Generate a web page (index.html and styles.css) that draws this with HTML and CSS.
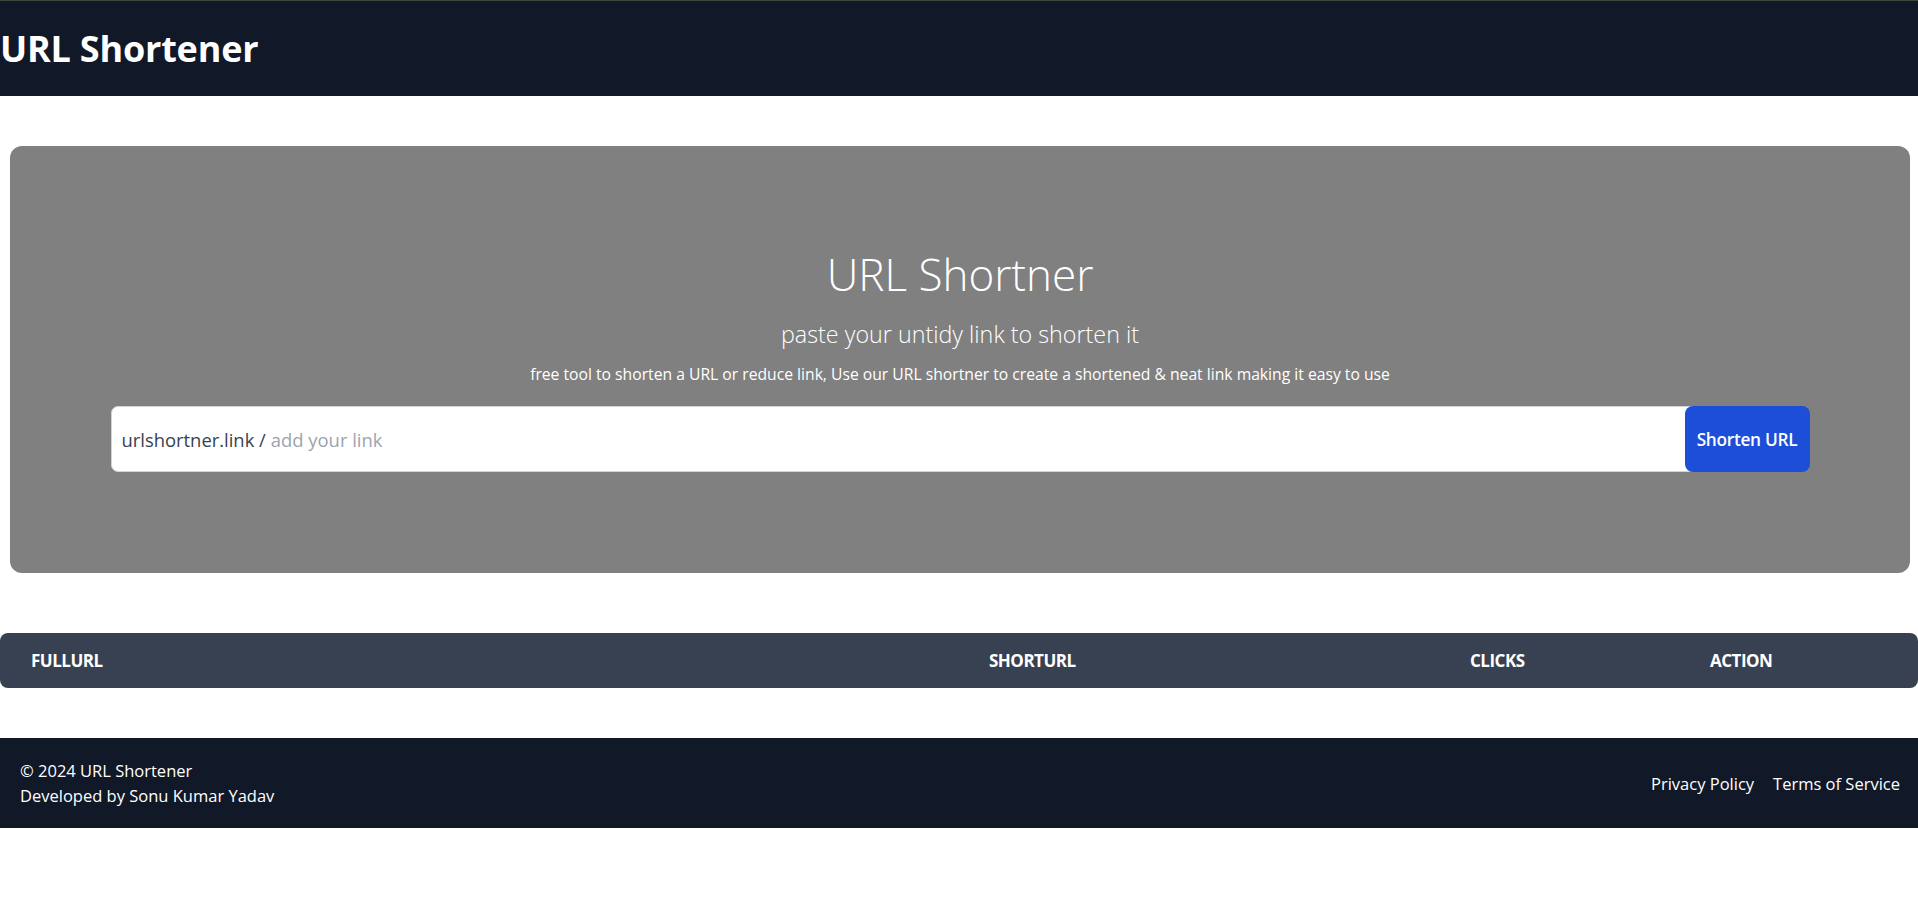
FILE: index.html
```html
<!DOCTYPE html>
<html lang="en">
<head>
<meta charset="utf-8">
<title>URL Shortener</title>
<link rel="stylesheet" href="styles.css">
</head>
<body>
<header class="topbar">
  <h1 class="brand">URL Shortener</h1>
</header>
<main class="main">
  <section class="hero">
    <h2 class="hero-title">URL Shortner</h2>
    <p class="hero-sub">paste your untidy link to shorten it</p>
    <p class="hero-desc">free tool to shorten a URL or reduce link, Use our URL shortner to create a shortened &amp; neat link making it easy to use</p>
    <form class="shorten-form">
      <div class="field">
        <span class="prefix">urlshortner.link /</span>
        <input class="link-input" type="text" placeholder="add your link">
      </div>
      <button class="btn" type="button">Shorten URL</button>
    </form>
  </section>
  <div class="table">
    <div class="thead">
      <div class="th">Fullurl</div>
      <div class="th">Shorturl</div>
      <div class="th">Clicks</div>
      <div class="th">Action</div>
    </div>
  </div>
</main>
<footer class="footer">
  <div class="credits">
    <div>© 2024 URL Shortener</div>
    <div>Developed by Sonu Kumar Yadav</div>
  </div>
  <nav class="links">
    <a href="#">Privacy Policy</a>
    <a href="#">Terms of Service</a>
  </nav>
</footer>
</body>
</html>
```
FILE: styles.css
```css
* { box-sizing: border-box; }
html, body { margin: 0; padding: 0; }
body {
  font-family: "Open Sans", "Noto Sans", sans-serif;
  background: #ffffff;
  color: #111827;
}
.topbar {
  background: #111827;
  border-top: 1px solid #3b4a3a;
  height: 96px;
  display: flex;
  align-items: center;
}
.brand {
  margin: 0;
  color: #ffffff;
  font-size: 36px;
  font-weight: 700;
  letter-spacing: -0.2px;
}
.main {
  padding-top: 50px;
}
.hero {
  margin: 0 8px 0 10px;
  background: #808080;
  border-radius: 12px;
  height: 427px;
  display: flex;
  flex-direction: column;
  align-items: center;
  padding-top: 104px;
  color: #ffffff;
}
.hero-title {
  margin: 0;
  font-size: 44px;
  font-weight: 300;
  line-height: 48px;
}
.hero-sub {
  margin: 20px 0 0;
  font-size: 23.3px;
  font-weight: 300;
  line-height: 32px;
}
.hero-desc {
  margin: 13px 0 0;
  font-size: 15.7px;
  font-weight: 400;
  line-height: 22px;
}
.shorten-form {
  margin-top: 21px;
  width: 1699px;
  display: flex;
  height: 66px;
}
.field {
  flex: 1;
  display: flex;
  align-items: center;
  background: #ffffff;
  border: 1px solid #d1d5db;
  border-radius: 7px 0 0 7px;
  padding-left: 10px;
  margin-right: -8px;
}
.prefix {
  color: #374151;
  font-size: 18.4px;
  white-space: pre;
}
.link-input {
  flex: 1;
  border: 0;
  outline: none;
  font-family: inherit;
  font-size: 18.4px;
  color: #374151;
  background: transparent;
  padding: 0 0 0 5px;
}
.link-input::placeholder { color: #9ca3af; }
.btn {
  position: relative;
  width: 125px;
  background: #1d4ed8;
  color: #ffffff;
  border: 0;
  border-radius: 8px;
  font-family: inherit;
  font-size: 17.3px;
  font-weight: 600;
  letter-spacing: -0.3px;
  cursor: pointer;
}
.table {
  margin-top: 60px;
}
.thead {
  display: grid;
  grid-template-columns: 958px 481px 240px 1fr;
  background: #374151;
  border-radius: 8px;
  height: 55px;
  align-items: center;
}
.th {
  padding-left: 31px;
  color: #ffffff;
  font-weight: 700;
  font-size: 17px;
  text-transform: uppercase;
  letter-spacing: -0.5px;
}
.footer {
  margin-top: 50px;
  background: #111827;
  height: 90px;
  display: flex;
  align-items: center;
  justify-content: space-between;
  padding: 0 18px 0 20px;
  color: #ffffff;
  font-size: 16.5px;
  line-height: 25px;
}
.links {
  display: flex;
  gap: 19px;
}
.links a {
  color: #ffffff;
  text-decoration: none;
}
```
